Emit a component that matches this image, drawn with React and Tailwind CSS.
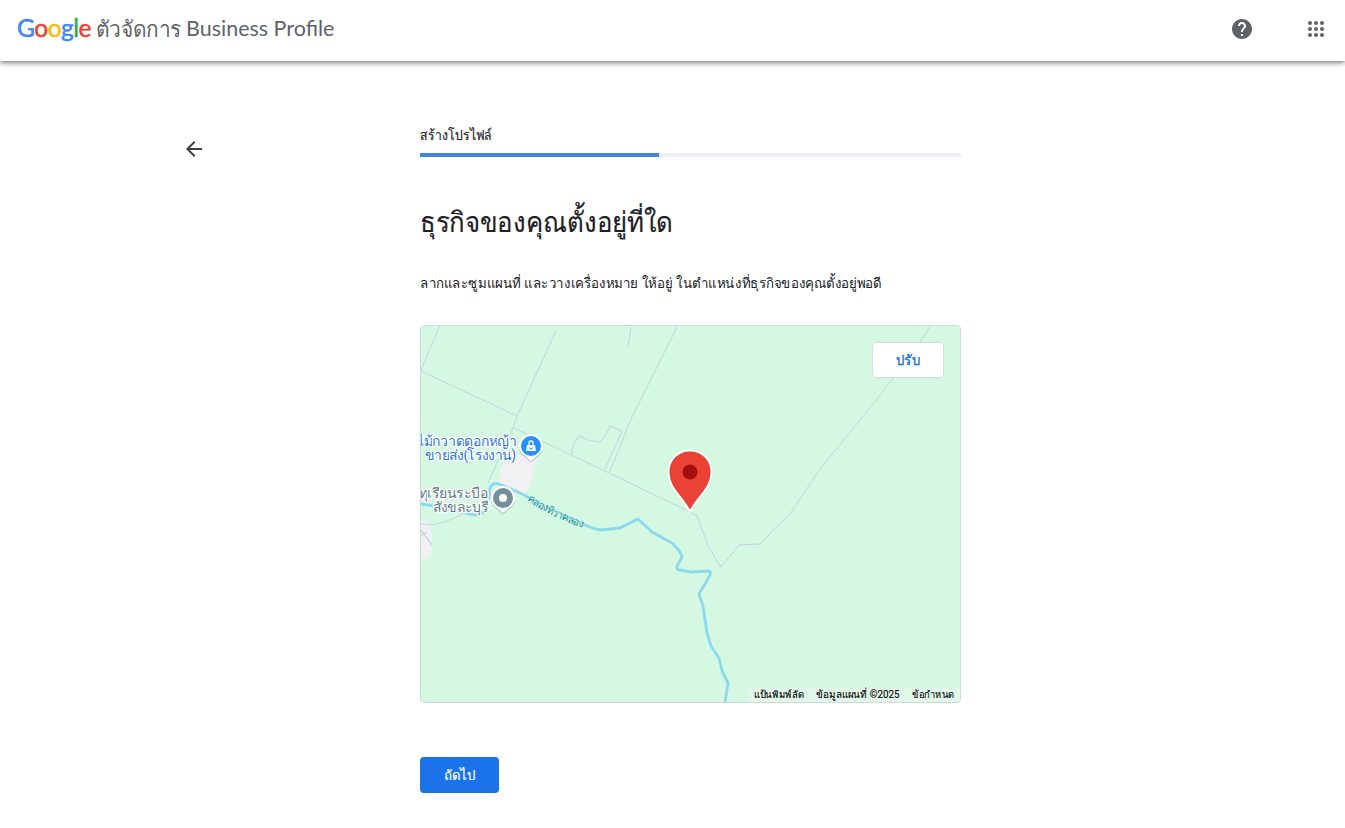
const logoLetters = [
  { char: "G", color: "text-[#4285f4]" },
  { char: "o", color: "text-[#ea4335]" },
  { char: "o", color: "text-[#fbbc05]" },
  { char: "g", color: "text-[#4285f4]" },
  { char: "l", color: "text-[#34a853]" },
  { char: "e", color: "text-[#ea4335]" },
];

const parcelLines = [
  "M440 325L421 370",
  "M421 371L517 416",
  "M556 331L517 416L513 428L488 483",
  "M514 428L605 471L690 512L697 516L708 545Q716 560 721 567L739 545L760 544Q766 539 773 530L790 514L820 469L878 398L893 378L920 342L931 325",
  "M631 327L628 347",
  "M678 325L632 417L610 471",
  "M572 454Q571 446 579 436Q590 442 600 442Q604 440 610 426L622 431L605 469",
  "M421 524Q436 527 452 519L466 512",
];

function Header() {
  return (
    <header className="relative flex h-[61px] items-center justify-between bg-white pl-[17px] pr-[21px] shadow-[0_1px_6px_rgba(0,0,0,0.65)]">
      <div className="flex h-[61px] items-center whitespace-nowrap pb-[2px] text-[#5f6368]">
        <span className="w-[79px] pb-[3px] font-['Lato'] text-[24.5px] leading-none tracking-[-0.5px] [-webkit-text-stroke:0.5px]">
          {logoLetters.map((l, i) => (
            <span key={i} className={l.color}>{l.char}</span>
          ))}
        </span>
        <span className="inline-block w-[90px] origin-left scale-x-[0.95] text-[22px]">ตัวจัดการ</span>
        <span className="pb-[2px] font-['Lato',sans-serif] text-[21.5px]">Business Profile</span>
      </div>
      <div className="flex items-center gap-[54px] pb-[3px] text-[#5f6368]">
        <svg width="24" height="24" viewBox="0 0 24 24" fill="currentColor">
          <path d="M12 2C6.48 2 2 6.48 2 12s4.48 10 10 10 10-4.48 10-10S17.52 2 12 2zm1 17h-2v-2h2v2zm2.07-7.75l-.9.92C13.45 12.9 13 13.5 13 15h-2v-.5c0-1.1.45-2.1 1.17-2.83l1.24-1.26c.37-.36.59-.86.59-1.41 0-1.1-.9-2-2-2s-2 .9-2 2H8c0-2.21 1.79-4 4-4s4 1.79 4 4c0 .88-.36 1.68-.93 2.25z" />
        </svg>
        <svg width="16" height="16" viewBox="0 0 16 16" fill="currentColor">
          {[2, 8, 14].map((y) =>
            [2, 8, 14].map((x) => <circle key={`${x}-${y}`} cx={x} cy={y} r="2" />)
          )}
        </svg>
      </div>
    </header>
  );
}

function MapDrawing() {
  return (
    <svg className="block h-full w-full" viewBox="421 326 539 376">
      <rect x="421" y="326" width="539" height="376" fill="#d4f8e2" />

      {/* Built-up areas */}
      <path d="M497 484L503 463Q508 455 520 455L537 461L533 476L528 490L521 496Z" fill="#f1f1f4" />
      <path d="M421 519Q430 520 431 530L433 541Q433 556 425 559L421 560Z" fill="#f1f1f4" />
      <path d="M421 530L432 545M421 536L427 532" fill="none" stroke="#cfd3dc" strokeWidth="1.5" />

      {/* Land parcels */}
      <g fill="none" stroke="#c4d2e0" strokeWidth="1">
        {parcelLines.map((d) => <path key={d} d={d} />)}
      </g>

      {/* Canal */}
      <path
        d="M421 504L440 507L465 513Q480 518 485 510L489 498L490 488Q493 482 499 484L520 493L545 506L585 525Q594 529 601 530L620 528L638 519L652 532L672 543L679 550L682 557L677 566Q676 570 680 570L691 572L709 571Q712 572 709 577L699 594L703 606L707 633L711 646L719 658L722 671L728 683L725 702"
        fill="none"
        stroke="#8cd9ee"
        strokeWidth="2.8"
        strokeLinejoin="round"
      />
      <path id="canal-label" d="M527 500Q554 519 588 529" fill="none" />
      <text className="font-['Roboto','Noto_Sans',sans-serif] text-[10.5px] font-medium" fill="#1a8ca6" stroke="#d4f8e2" strokeWidth="1" paintOrder="stroke">
        <textPath href="#canal-label" textLength="62">คลองทิวาคลอง</textPath>
      </text>

      {/* Places */}
      <g className="font-['Roboto','Noto_Sans',sans-serif] text-[14px]" stroke="#ffffff" strokeWidth="2.5" strokeLinejoin="round" paintOrder="stroke">
        <g fill="#3072d8">
          <text x="417" y="446" textLength="100">ไม้กวาดดอกหญ้า</text>
          <text x="425" y="460" textLength="91">ขายส่ง(โรงงาน)</text>
        </g>
        <g fill="#647985">
          <text x="418" y="498" textLength="69">ทุเรียนระบือ</text>
          <text x="432" y="512" textLength="56">สังขละบุรี</text>
        </g>
      </g>
      <g>
        <path d="M531 434a12 12 0 0 1 12 12c0 5-3 8-6 10l-6 5-6-5c-3-2-6-5-6-10a12 12 0 0 1 12-12z" fill="#9cabb0" transform="translate(0 1.200)" opacity="0.7" />
        <path d="M531 434a12 12 0 0 1 12 12c0 5-3 8-6 10l-6 5-6-5c-3-2-6-5-6-10a12 12 0 0 1 12-12z" fill="#ffffff" />
        <circle cx="531" cy="446" r="10" fill="#2492fa" />
        <path d="M527 445h8l1 6h-10z" fill="#ffffff" />
        <path d="M529 445v-2a2 2 0 0 1 4 0v2" fill="none" stroke="#ffffff" strokeWidth="1.300" />
        <path d="M529.500 447.500a1.500 1.500 0 0 0 3 0" fill="none" stroke="#2492fa" strokeWidth="1" />
      </g>
      <g>
        <path d="M503 486a12 12 0 0 1 12 12c0 5-3 8-6 10l-6 5-6-5c-3-2-6-5-6-10a12 12 0 0 1 12-12z" fill="#9cabb0" transform="translate(0 1.200)" opacity="0.7" />
        <path d="M503 486a12 12 0 0 1 12 12c0 5-3 8-6 10l-6 5-6-5c-3-2-6-5-6-10a12 12 0 0 1 12-12z" fill="#ffffff" />
        <circle cx="503" cy="498" r="10" fill="#738f9b" />
        <circle cx="503" cy="498" r="4" fill="#ffffff" />
      </g>

      {/* Business marker */}
      <path
        d="M690 511.500C682 496 668.500 488 668.500 472C668.500 459.500 678 450.500 690 450.500S711.500 459.500 711.500 472C711.500 488 698 496 690 511.500Z"
        fill="#ea4335"
        stroke="#ffffff"
        strokeWidth="1.800"
      />
      <circle cx="690" cy="472" r="7.500" fill="#a50e0e" />
    </svg>
  );
}

export default function App() {
  return (
    <div className="h-[828px] overflow-hidden bg-white font-['Roboto','Noto_Sans',sans-serif] text-[#202124]">
      <Header />
      <div className="flex">
        <div className="w-[420px] pl-[182px] pt-[76px]">
          <svg width="24" height="24" viewBox="0 0 24 24" fill="#3c4043">
            <path d="M20 11H7.830l5.590-5.590L12 4l-8 8 8 8 1.410-1.410L7.830 13H20v-2z" />
          </svg>
        </div>
        <main className="w-[541px] pt-[64px]">
          <p className="h-[28px] whitespace-nowrap text-sm font-medium leading-5">
            <span className="inline-block origin-left scale-x-[0.87] [-webkit-text-stroke:0.2px]">สร้างโปรไฟล์</span>
          </p>
          <div className="h-1 bg-[#f0ebfb]">
            <div className="h-1 w-[239px] bg-[#4285e0]" />
          </div>
          <h1 className="mt-[46px] h-10 whitespace-nowrap text-[28px] leading-10">
            <span className="inline-block origin-left scale-x-[0.92] [-webkit-text-stroke:0.2px]">ธุรกิจของคุณตั้งอยู่ที่ใด</span>
          </h1>
          <p className="mt-[30px] h-5 whitespace-nowrap text-sm leading-5">
            <span className="inline-block origin-left scale-x-[0.95]">
              ลากและซูมแผนที่ และวางเครื่องหมาย<span className="ml-1">ให้อยู่</span><span className="ml-1">ในตำแหน่งที่ธุรกิจของคุณตั้งอยู่พอดี</span>
            </span>
          </p>
          <div className="relative mt-8 h-[378px] w-[541px] overflow-hidden rounded border border-[#c9dcd5]">
            <MapDrawing />
            <button className="absolute right-4 top-4 h-9 w-[72px] rounded border border-[#dadce0] bg-white text-sm font-medium text-[#1a73e8]">
              <span className="inline-block scale-x-[0.94] [-webkit-text-stroke:0.4px]">ปรับ</span>
            </button>
            <div className="absolute bottom-0 right-0 flex h-[14px] w-[211px] items-center whitespace-nowrap bg-[#e2f6ea] pb-[2px] pl-[5px] text-[10px] text-black [-webkit-text-stroke:0.1px]">
              <span className="w-[62px] origin-left scale-x-[0.95]">แป้นพิมพ์ลัด</span>
              <span className="w-[96px] origin-left scale-x-[0.985]">ข้อมูลแผนที่ ©2025</span>
              <span className="w-[44px] origin-left scale-x-[0.93]">ข้อกำหนด</span>
            </div>
          </div>
          <button className="mt-[54px] block h-9 w-[79px] rounded bg-[#1a73e8] text-sm font-medium text-white">
            <span className="inline-block scale-x-[0.94] [-webkit-text-stroke:0.2px]">ถัดไป</span>
          </button>
        </main>
      </div>
    </div>
  );
}
